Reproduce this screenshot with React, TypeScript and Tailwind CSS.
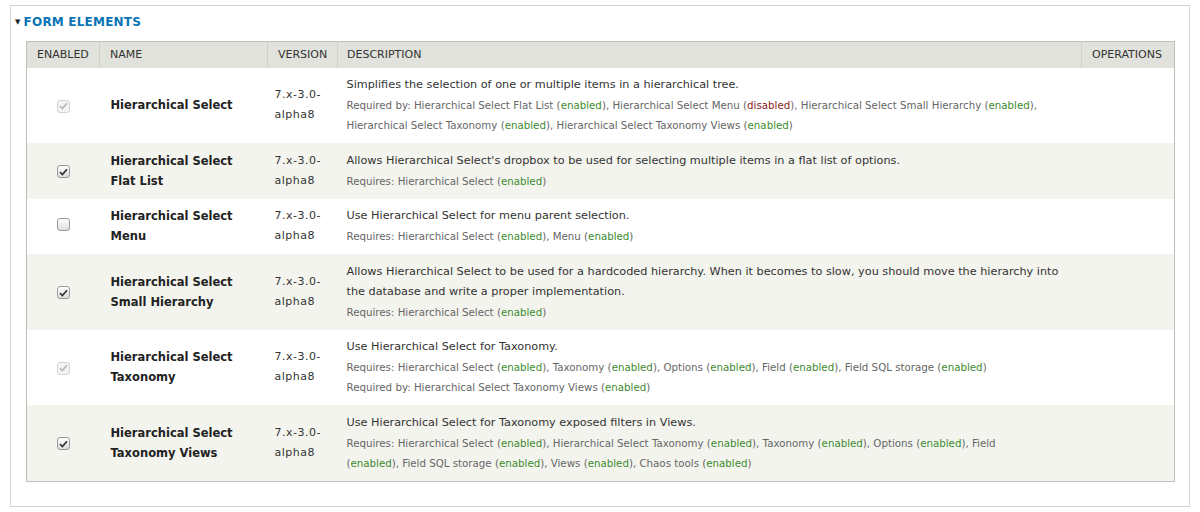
import type { ReactNode } from "react";

type Module = {
  name: ReactNode;
  version: string;
  checked: boolean;
  disabled: boolean;
  description: ReactNode;
  lines: ReactNode[];
};

const On = () => <span className="text-[#3d8b2f]">enabled</span>;
const Off = () => <span className="text-[#8c1c1c]">disabled</span>;

const modules: Module[] = [
  {
    name: "Hierarchical Select",
    version: "7.x-3.0-alpha8",
    checked: true,
    disabled: true,
    description: "Simplifies the selection of one or multiple items in a hierarchical tree.",
    lines: [
      <>Required by: Hierarchical Select Flat List (<On />), Hierarchical Select Menu (<Off />), Hierarchical Select Small Hierarchy (<On />),</>,
      <>Hierarchical Select Taxonomy (<On />), Hierarchical Select Taxonomy Views (<On />)</>,
    ],
  },
  {
    name: <>Hierarchical Select<br />Flat List</>,
    version: "7.x-3.0-alpha8",
    checked: true,
    disabled: false,
    description: "Allows Hierarchical Select's dropbox to be used for selecting multiple items in a flat list of options.",
    lines: [<>Requires: Hierarchical Select (<On />)</>],
  },
  {
    name: <>Hierarchical Select<br />Menu</>,
    version: "7.x-3.0-alpha8",
    checked: false,
    disabled: false,
    description: "Use Hierarchical Select for menu parent selection.",
    lines: [<>Requires: Hierarchical Select (<On />), Menu (<On />)</>],
  },
  {
    name: <>Hierarchical Select<br />Small Hierarchy</>,
    version: "7.x-3.0-alpha8",
    checked: true,
    disabled: false,
    description: (
      <>
        Allows Hierarchical Select to be used for a hardcoded hierarchy. When it becomes to slow, you should move the hierarchy into
        <br />
        the database and write a proper implementation.
      </>
    ),
    lines: [<>Requires: Hierarchical Select (<On />)</>],
  },
  {
    name: <>Hierarchical Select<br />Taxonomy</>,
    version: "7.x-3.0-alpha8",
    checked: true,
    disabled: true,
    description: "Use Hierarchical Select for Taxonomy.",
    lines: [
      <>Requires: Hierarchical Select (<On />), Taxonomy (<On />), Options (<On />), Field (<On />), Field SQL storage (<On />)</>,
      <>Required by: Hierarchical Select Taxonomy Views (<On />)</>,
    ],
  },
  {
    name: <>Hierarchical Select<br />Taxonomy Views</>,
    version: "7.x-3.0-alpha8",
    checked: true,
    disabled: false,
    description: "Use Hierarchical Select for Taxonomy exposed filters in Views.",
    lines: [
      <>Requires: Hierarchical Select (<On />), Hierarchical Select Taxonomy (<On />), Taxonomy (<On />), Options (<On />), Field</>,
      <>(<On />), Field SQL storage (<On />), Views (<On />), Chaos tools (<On />)</>,
    ],
  },
];

function Checkbox({ checked, disabled }: { checked: boolean; disabled: boolean }) {
  return (
    <span
      className={
        "inline-flex w-[13px] h-[13px] items-center justify-center rounded-[3px] border " +
        (disabled
          ? "border-[#d4d4d4] bg-[#f4f4f4]"
          : "border-[#9a9a9a] bg-gradient-to-b from-[#ffffff] to-[#dcdcdc]")
      }
    >
      {checked && (
        <svg width="9" height="8" viewBox="0 0 9 8">
          <path
            d="M1 4.2 L3.4 6.6 L8 1.2"
            fill="none"
            stroke={disabled ? "#b8b8b8" : "#333"}
            strokeWidth="1.7"
          />
        </svg>
      )}
    </span>
  );
}

export default function App() {
  return (
    <div className="w-[1200px] h-[512px] bg-white px-[10px] pt-[5px] text-[#333]" style={{ fontFamily: '"DejaVu Sans", Verdana, sans-serif' }}>
      <div className="h-[502px] border border-[#d4d4d4] pl-[15px] pr-[14px]">
        <div className="flex items-center h-[31px] pt-[1px] -ml-[11px] text-[12px] font-bold tracking-[0.2px] text-[#0a74b5]">
          <span className="text-[7px] text-[#222] mr-[3px]">▼</span>
          FORM ELEMENTS
        </div>

        <table className="w-full border-collapse border border-[#c0c0bb] mt-[4px]">
          <thead>
            <tr className="h-[26px] bg-[#e1e2dc] text-[11px] text-[#333] text-left">
              <th className="w-[73px] pl-[10px] font-normal border-r border-[#cfd0ca]">ENABLED</th>
              <th className="w-[168px] pl-[10px] font-normal border-r border-[#cfd0ca]">NAME</th>
              <th className="w-[70px] pl-[10px] font-normal border-r border-[#cfd0ca]">VERSION</th>
              <th className="pl-[9px] font-normal border-r border-[#cfd0ca]">DESCRIPTION</th>
              <th className="w-[93px] pl-[10px] font-normal">OPERATIONS</th>
            </tr>
          </thead>
          <tbody>
            {modules.map((m, i) => (
              <tr key={i} className={i % 2 === 1 ? "bg-[#f3f4ee]" : "bg-white"}>
                <td className="text-center align-middle py-[7.75px]">
                  <Checkbox checked={m.checked} disabled={m.disabled} />
                </td>
                <td className="pl-[11px] pr-[4px] align-middle text-[11.5px] leading-[20px] font-bold text-[#222]">
                  {m.name}
                </td>
                <td className="pl-[7px] align-middle text-[11px] leading-[20px] tracking-[0.5px] text-[#333]">
                  7.x-3.0-
                  <br />
                  alpha8
                </td>
                <td className="pl-[9px] py-[7.75px] align-middle whitespace-nowrap">
                  <div className="text-[11.25px] leading-[20px] text-[#333]">{m.description}</div>
                  {m.lines.map((l, j) => (
                    <div key={j} className="text-[10.25px] leading-[20px] text-[#666]">
                      {l}
                    </div>
                  ))}
                </td>
                <td />
              </tr>
            ))}
          </tbody>
        </table>
      </div>
    </div>
  );
}
